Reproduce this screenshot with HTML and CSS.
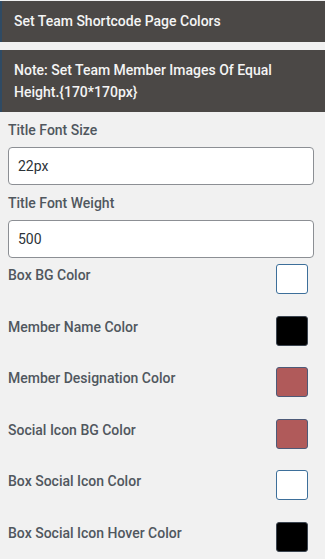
FILE: index.html
```html
<!DOCTYPE html>
<html lang="en">
<head>
    <meta charset="UTF-8">
    <meta name="viewport" content="width=device-width, initial-scale=1.0">
    <title>Set Team Shortcode Page Colors</title>
    <link rel="stylesheet" href="styles.css">
</head>
<body>
    <div class="panel">
        <h2 class="panel-head">Set Team Shortcode Page Colors</h2>
        <p class="panel-note">Note: Set Team Member Images Of Equal Height.{170*170px}</p>

        <form class="settings">
            <div class="field">
                <label for="titleSize">Title Font Size</label>
                <input type="text" id="titleSize" value="22px">
            </div>
            <div class="field">
                <label for="titleWeight">Title Font Weight</label>
                <input type="text" id="titleWeight" value="500">
            </div>

            <div class="colors">
                <div class="color-row">
                    <span class="color-label">Box BG Color</span>
                    <span class="swatch swatch-white"></span>
                </div>
                <div class="color-row">
                    <span class="color-label">Member Name Color</span>
                    <span class="swatch swatch-black"></span>
                </div>
                <div class="color-row">
                    <span class="color-label">Member Designation Color</span>
                    <span class="swatch swatch-red"></span>
                </div>
                <div class="color-row">
                    <span class="color-label">Social Icon BG Color</span>
                    <span class="swatch swatch-red"></span>
                </div>
                <div class="color-row">
                    <span class="color-label">Box Social Icon Color</span>
                    <span class="swatch swatch-white"></span>
                </div>
                <div class="color-row">
                    <span class="color-label">Box Social Icon Hover Color</span>
                    <span class="swatch swatch-black"></span>
                </div>
            </div>
        </form>
    </div>
</body>
</html>
```

FILE: styles.css
```css
body {
    margin: 0;
    background-color: #f1f1f1;
    font-family: Roboto, "Noto Sans", sans-serif;
    font-size: 14px;
}
.panel {
    padding-top: 1px;
}
.panel-head,
.panel-note {
    margin: 0;
    background-color: #4b4846;
    border-left: 2px solid #2f4a63;
    color: #f4f4f4;
    font-size: 14px;
    font-weight: 500;
    padding-left: 12px;
    padding-right: 12px;
}
.panel-head {
    height: 41px;
    line-height: 41px;
    box-sizing: border-box;
}
.panel-note {
    margin-top: 8px;
    height: 62px;
    box-sizing: border-box;
    padding-top: 9px;
    line-height: 22px;
}
.settings {
    padding: 0 11px 0 8px;
}
.field label {
    display: block;
    margin-top: 8px;
    margin-bottom: 7px;
    line-height: 20px;
    color: #50575e;
    font-weight: 500;
}
.field input {
    display: block;
    width: 100%;
    height: 38px;
    box-sizing: border-box;
    padding: 0 9px;
    border: 1px solid #8c8f94;
    border-radius: 4px;
    background-color: #fff;
    color: #2c3338;
    font-family: Roboto, "Noto Sans", sans-serif;
    font-size: 14px;
}
.colors {
    display: flex;
    flex-direction: column;
    gap: 21.6px;
    margin-top: 6px;
    padding-right: 6px;
}
.color-row {
    display: flex;
    justify-content: space-between;
    align-items: flex-start;
    height: 30px;
}
.color-label {
    padding-top: 1px;
    line-height: 20px;
    color: #50575e;
    font-weight: 500;
}
.swatch {
    width: 32px;
    height: 30px;
    box-sizing: border-box;
    border-radius: 3px;
    border: 1px solid #2c5a85;
}
.swatch-white {
    background-color: #fff;
    border-color: #3d6f9a;
}
.swatch-black {
    background-color: #000;
    border-color: #3c4550;
}
.swatch-red {
    background-color: #b05a5a;
    border-color: #4d5a78;
}
```
